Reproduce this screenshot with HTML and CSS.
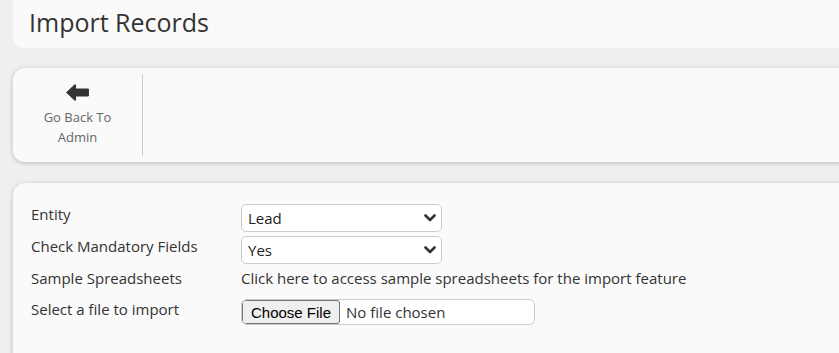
FILE: index.html
```html
<!DOCTYPE html>
<html lang="en">
<head>
  <meta charset="UTF-8">
  <meta name="viewport" content="width=device-width, initial-scale=1.0">
  <title>Import Records</title>
  <link rel="stylesheet" href="styles.css">
</head>
<body>

  <div class="page">
    <div class="card title-card">
      <h1>Import Records</h1>
    </div>

    <div class="card toolbar">
      <a class="tool-btn" href="#">
        <svg class="tool-icon" width="23" height="17" viewBox="0 0 23 17">
          <path d="M0.6 8.5 L9 0.6 L9.6 0.9 L9.6 5 L22.4 5 L22.4 12 L9.6 12 L9.6 16.1 L9 16.4 Z" fill="#333" stroke="#333" stroke-width="1" stroke-linejoin="round"/>
        </svg>
        <span>Go Back To<br>Admin</span>
      </a>
    </div>

    <div class="card form-card">
      <form class="import-form">
        <label for="entity">Entity</label>
        <div class="field">
          <select id="entity" name="entity">
            <option>Lead</option>
            <option>Contact</option>
            <option>Account</option>
          </select>
        </div>

        <label for="mandatory">Check Mandatory Fields</label>
        <div class="field">
          <select id="mandatory" name="mandatory">
            <option>Yes</option>
            <option>No</option>
          </select>
        </div>

        <label>Sample Spreadsheets</label>
        <div class="field">
          <a class="sample-link" href="#">Click here to access sample spreadsheets for the import feature</a>
        </div>

        <label for="file">Select a file to import</label>
        <div class="field">
          <input type="file" id="file" name="file">
        </div>
      </form>
    </div>
  </div>

</body>
</html>
```

FILE: styles.css
```css
body {
  margin: 0;
  font-family: 'Open Sans', sans-serif;
  font-size: 15px;
  color: #333;
  background-color: #efefef;
}

.page {
  padding-left: 13px;
  overflow: hidden;
  height: 353px;
}

.card {
  background-color: #fafafa;
  border-radius: 12px;
  margin-right: -30px;
  box-shadow: 0 1px 4px rgba(0, 0, 0, 0.22);
}

.title-card {
  margin-top: -12px;
  padding: 18px 16px 9px;
  box-shadow: none;
}

h1 {
  margin: 0;
  font-size: 25px;
  font-weight: 400;
  line-height: 33px;
  color: #333;
}

.toolbar {
  margin-top: 20px;
  padding: 6px 0;
  display: flex;
}

.tool-btn {
  width: 130px;
  height: 82px;
  box-sizing: border-box;
  border-right: 1px solid #ccc;
  display: flex;
  flex-direction: column;
  align-items: center;
  padding-top: 10px;
  text-decoration: none;
  color: #666;
  font-size: 13px;
  line-height: 20px;
  text-align: center;
}

.tool-icon {
  display: block;
  margin-bottom: 6px;
}

.form-card {
  margin-top: 21px;
  padding: 21px 18px 40px;
}

.import-form {
  display: grid;
  grid-template-columns: 210px 1fr;
  grid-auto-rows: minmax(27px, auto);
  row-gap: 4px;
}

.import-form label {
  line-height: 20px;
  color: #333;
}

.field {
  line-height: 20px;
}

select {
  -webkit-appearance: none;
  appearance: none;
  width: 201px;
  height: 28px;
  padding: 0 24px 0 6px;
  font-family: 'Open Sans', sans-serif;
  font-size: 15px;
  color: #222;
  background-color: #fff;
  background-image: url("data:image/svg+xml,%3Csvg xmlns='http://www.w3.org/2000/svg' width='12' height='8' viewBox='0 0 12 8'%3E%3Cpath d='M1.5 1.5 L6 6 L10.5 1.5' fill='none' stroke='%23333' stroke-width='2.6' stroke-linecap='round' stroke-linejoin='round'/%3E%3C/svg%3E");
  background-repeat: no-repeat;
  background-position: right 5px center;
  border: 1px solid #ccc;
  border-radius: 5px;
}

.sample-link {
  color: #333;
  text-decoration: none;
}

input[type="file"] {
  width: 294px;
  height: 26px;
  box-sizing: border-box;
  font-family: 'Open Sans', sans-serif;
  font-size: 15px;
  color: #333;
  border: 1px solid #ccc;
  border-radius: 6px;
  background-color: #fff;
  padding: 0;
}

input[type="file"]::file-selector-button {
  height: 24px;
  margin: 0 6px 0 0;
  padding: 0 8px;
  font-family: 'Liberation Sans', Arial, sans-serif;
  font-size: 15px;
  color: #000;
  background-color: #efefef;
  border: 1px solid #767676;
  border-radius: 3px;
}
```
